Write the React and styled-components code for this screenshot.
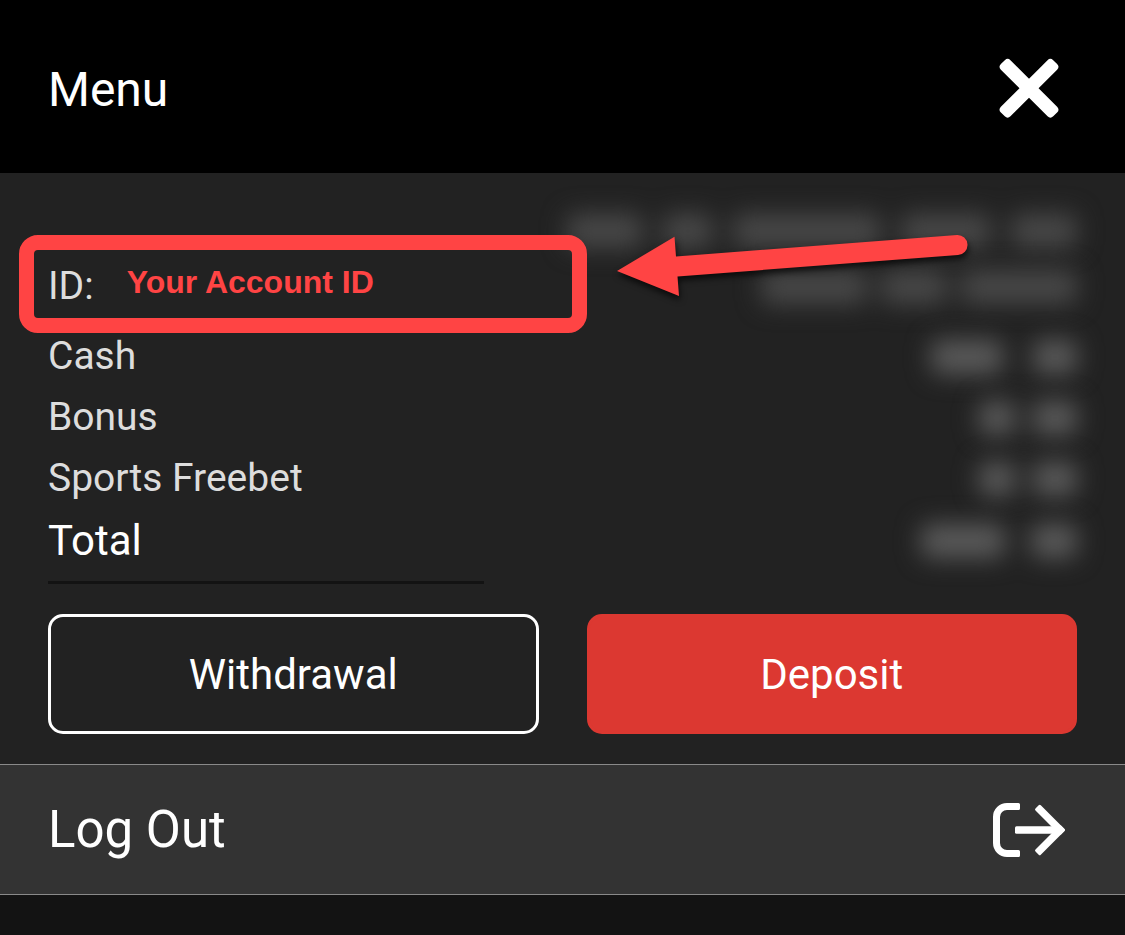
import React from "react"
import styled, { createGlobalStyle } from "styled-components"

const balances = [
  { label: "Cash", hidden: [72, 44], gap: 30 },
  { label: "Bonus", hidden: [36, 44], gap: 18 },
  { label: "Sports Freebet", hidden: [36, 44], gap: 18 },
]

const App = () => {
  return (
    <Page>
      <GlobalStyle />
      <Header>
        <Title>Menu</Title>
        <IconButton aria-label="Close">
          <CloseIcon />
        </IconButton>
      </Header>
      <Account>
        <AccountTop>
          <IdField>
            <IdLabel>ID:</IdLabel>
            <IdNote>Your Account ID</IdNote>
            <Arrow />
          </IdField>
          <SessionInfo>
            <HiddenValue widths={[76, 50, 148, 90, 66]} gap={20} tall={56} />
            <HiddenValue widths={[106, 66, 116]} gap={14} tall={56} />
          </SessionInfo>
        </AccountTop>
        {balances.map(({ label, hidden, gap }) => (
          <Row key={label}>
            <span>{label}</span>
            <HiddenValue widths={hidden} gap={gap} bright />
          </Row>
        ))}
        <Row $total>
          <span>Total</span>
          <HiddenValue widths={[84, 46]} gap={26} bright />
        </Row>
        <Divider />
        <Actions>
          <ActionButton>Withdrawal</ActionButton>
          <ActionButton $primary>Deposit</ActionButton>
        </Actions>
      </Account>
      <LogOut>
        <span>Log Out</span>
        <LogOutIcon />
      </LogOut>
    </Page>
  )
}

const HiddenValue = ({ widths, gap, tall, bright }) => (
  <Blurred $gap={gap} $tall={tall} $bright={bright} aria-hidden="true">
    {widths.map((width, i) => (
      <Smudge key={i} style={{ width }} />
    ))}
  </Blurred>
)

const CloseIcon = () => (
  <svg viewBox="0 0 96 96" width="96" height="96" fill="#fff">
    <rect x="11" y="40.5" width="74" height="13.5" rx="4" transform="rotate(45 48 47.25)" />
    <rect x="11" y="40.5" width="74" height="13.5" rx="4" transform="rotate(-45 48 47.25)" />
  </svg>
)

const LogOutIcon = () => (
  <svg viewBox="0 0 96 96" width="96" height="96" fill="#fff">
    <path d="M37.5 21a1.5 1.5 0 0 1 1.5 1.5v4a1.5 1.5 0 0 1-1.5 1.5H26a7 7 0 0 0-7 7v26a7 7 0 0 0 7 7h11.5a1.5 1.5 0 0 1 1.5 1.5v4a1.5 1.5 0 0 1-1.5 1.5H26a14 14 0 0 1-14-14V35a14 14 0 0 1 14-14z" />
    <rect x="34" y="44.25" width="46" height="7.5" rx="1.5" />
    <rect x="46.5" y="44.25" width="36.5" height="7.5" rx="1.5" transform="rotate(45 79.25 48)" />
    <rect x="46.5" y="44.25" width="36.5" height="7.5" rx="1.5" transform="rotate(-45 79.25 48)" />
  </svg>
)

const Arrow = () => (
  <ArrowSvg viewBox="0 0 366 80" width="366" height="80" aria-hidden="true">
    <path d="M7 41 64.5 6.7 66 26.5 347 5a10 10 0 0 1 1 20L67.5 46.5 69 66z" fill="#ff4444" />
  </ArrowSvg>
)

const GlobalStyle = createGlobalStyle`
  * {
    box-sizing: border-box;
  }

  body {
    margin: 0;
    background-color: #131313;
    color: #fff;
    font-family: Roboto, sans-serif;
  }

  button {
    font-family: inherit;
    color: inherit;
    cursor: pointer;
  }

  svg {
    display: block;
    flex-shrink: 0;
  }
`

const Page = styled.main`
  min-height: 100vh;
  overflow: hidden;
`

const Header = styled.header`
  display: flex;
  justify-content: space-between;
  align-items: center;
  height: 173px;
  padding: 4px 48px 0;
  background-color: #000;
`

const Title = styled.h1`
  margin: 0;
  padding-top: 2px;
  font-size: 48px;
  font-weight: 400;
`

const IconButton = styled.button`
  padding: 0;
  border: none;
  background: none;
`

const Account = styled.section`
  padding: 30px 48px;
  background-color: #222;
`

const AccountTop = styled.div`
  display: flex;
  justify-content: space-between;
  margin-bottom: -7px;
`

/* the thick frame hangs out to the left so the label lines up with the rows */
const IdField = styled.div`
  display: flex;
  align-items: center;
  gap: 33px;
  position: relative;
  z-index: 1;
  flex: 0 0 568px;
  height: 98px;
  margin: 32px 0 0 -29px;
  padding-left: 14px;
  border: 15px solid #ff4444;
  border-radius: 19px;
`

const IdLabel = styled.span`
  padding-top: 4px;
  font-size: 39px;
  color: #ddd;
`

const IdNote = styled.strong`
  padding-bottom: 4px;
  font-family: "Liberation Sans", Arial, sans-serif;
  font-size: 32px;
  line-height: 40px;
  color: #ff4444;
`

const ArrowSvg = styled.svg`
  position: absolute;
  top: -20px;
  left: calc(100% + 38px);
  pointer-events: none;
  filter: drop-shadow(1px 4px 3px #000000b0);
`

const SessionInfo = styled.div`
  display: flex;
  flex: 1;
  flex-direction: column;
  align-items: flex-end;
  min-width: 0;
`

const Row = styled.div`
  display: flex;
  justify-content: space-between;
  align-items: center;
  font-size: ${({ $total }) => ($total ? "42px" : "39px")};
  line-height: ${({ $total }) => ($total ? "64px" : "61px")};
  color: ${({ $total }) => ($total ? "#fff" : "#ddd")};
`

const Blurred = styled.div`
  display: flex;
  align-items: center;
  gap: ${({ $gap }) => $gap}px;
  height: ${({ $tall }) => $tall || 40}px;
  color: ${({ $bright }) => ($bright ? "#5a5a5a" : "#484848")};
  filter: blur(12px);
`

const Smudge = styled.span`
  flex-shrink: 0;
  height: 34px;
  border-radius: 8px;
  background-color: currentColor;
`

const Divider = styled.hr`
  width: 436px;
  max-width: 100%;
  height: 3px;
  margin: 8px 0 30px;
  border: none;
  background-color: #131313;
`

const Actions = styled.div`
  display: grid;
  grid-template-columns: 1fr 1fr;
  gap: 48px;
`

const ActionButton = styled.button`
  height: 120px;
  border: 3px solid ${({ $primary }) => ($primary ? "#dc3831" : "#fff")};
  border-radius: 15px;
  background-color: ${({ $primary }) => ($primary ? "#dc3831" : "transparent")};
  font-size: 42px;
`

const LogOut = styled.button`
  display: flex;
  justify-content: space-between;
  align-items: center;
  width: 100%;
  height: 131px;
  padding: 0 48px;
  border: solid #8a8a8a;
  border-width: 1px 0;
  background-color: #333;
  font-size: 51px;
`

export default App
